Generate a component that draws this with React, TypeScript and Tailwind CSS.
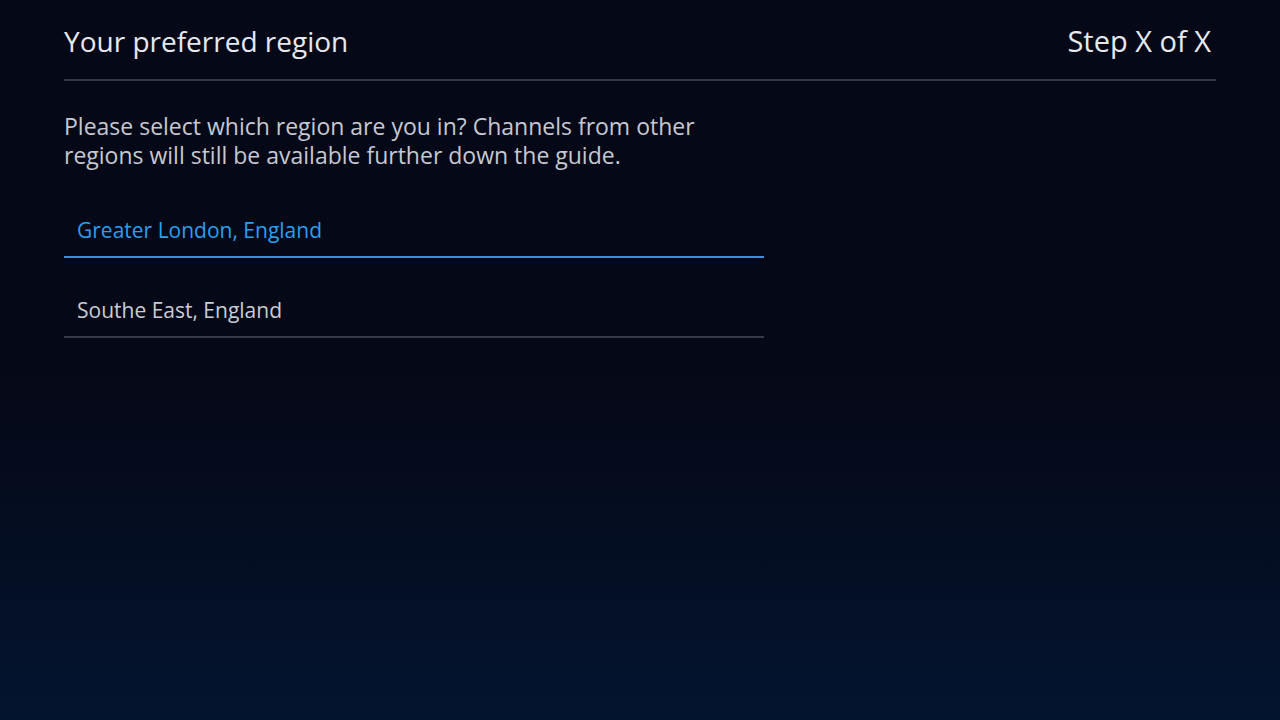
export default function App() {
  const regions = [
    { name: "Greater London, England", selected: true },
    { name: "Southe East, England", selected: false },
  ];

  return (
    <div
      className="w-[1280px] h-[720px] overflow-hidden bg-gradient-to-b from-[#050816] from-50% to-[#03142f] px-16"
      style={{ fontFamily: '"Open Sans", "Noto Sans", sans-serif' }}
    >
      {/* Header */}
      <div className="flex items-end justify-between h-[81px] pb-[24px] border-b-2 border-[#363a46]">
        <h1 className="text-[28px] leading-none text-[#e6e8ef]">Your preferred region</h1>
        <span className="text-[29px] leading-none text-[#e6e8ef] pr-[5px]">Step X of X</span>
      </div>

      <p className="mt-[31px] w-[710px] text-[23px] leading-[29px] text-[#c5c8d3]">
        Please select which region are you in? Channels from other regions will still be available
        further down the guide.
      </p>

      <div className="mt-[8px] w-[700px] flex flex-col">
        {regions.map((r) => (
          <div
            key={r.name}
            className={`h-[80px] flex items-end pb-[15px] pl-[13px] border-b-2 text-[21px] leading-none ${
              r.selected ? "border-[#3f8cd9] text-[#2a9ff0]" : "border-[#363a46] text-[#c9ccd6]"
            }`}
          >
            {r.name}
          </div>
        ))}
      </div>
    </div>
  );
}
